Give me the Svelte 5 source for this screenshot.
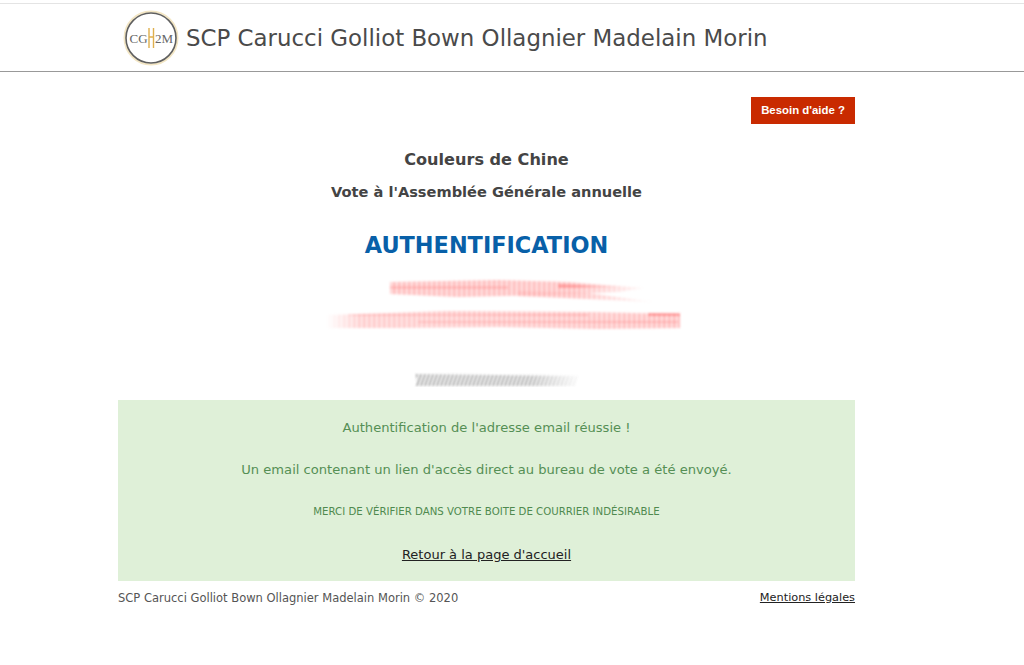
<script>
	const office = 'SCP Carucci Golliot Bown Ollagnier Madelain Morin';
</script>

<div class="page">
	<header class="topbar">
		<div class="brand">
			<svg class="logo" width="56" height="56" viewBox="0 0 56 56" aria-label="CG2M">
				<circle cx="28" cy="28" r="26.5" fill="none" stroke="#f3e6c4" stroke-width="2" />
				<circle cx="28" cy="28" r="25" fill="#fff" stroke="#5f5f5f" stroke-width="1.6" />
				<text x="6.5" y="33" class="logo-text">CG</text>
				<text x="32" y="33" class="logo-text">2M</text>
				<path d="M26 18v20M30.5 18v20M26 27h4.5" fill="none" stroke="#dfb04e" stroke-width="1.4" />
			</svg>
			<span class="office">{office}</span>
		</div>
	</header>

	<main class="content">
		<div class="help-row">
			<a class="help" href="#aide">Besoin d'aide ?</a>
		</div>

		<h1>Couleurs de Chine</h1>
		<h2>Vote à l'Assemblée Générale annuelle</h2>
		<h3>AUTHENTIFICATION</h3>

		<svg class="smears" width="737" height="116" viewBox="0 0 737 116" aria-hidden="true">
			<defs>
				<filter id="soft" x="-10%" y="-100%" width="120%" height="300%">
					<feGaussianBlur stdDeviation="0.9 0.9" />
				</filter>
				<pattern id="hatchRed" width="5" height="5" patternUnits="userSpaceOnUse">
					<rect width="5" height="5" fill="#fcc" fill-opacity="0.6" />
					<rect width="2.5" height="5" fill="#f99" fill-opacity="0.5" />
				</pattern>
				<pattern id="hatchGrey" width="4" height="4" patternUnits="userSpaceOnUse" patternTransform="skewX(-20)">
					<rect width="1.4" height="4" fill="#666" fill-opacity="0.8" />
				</pattern>
				<linearGradient id="fadeOut" x1="0" x2="1" y1="0" y2="0">
					<stop offset="0" stop-color="#fff" />
					<stop offset="0.7" stop-color="#fff" />
					<stop offset="1" stop-color="#000" />
				</linearGradient>
				<linearGradient id="fadeIn" x1="0" x2="1" y1="0" y2="0">
					<stop offset="0" stop-color="#000" />
					<stop offset="0.1" stop-color="#ccc" />
					<stop offset="1" stop-color="#fff" />
				</linearGradient>
				<mask id="maskOut" maskContentUnits="userSpaceOnUse">
					<rect x="268" y="0" width="272" height="35" fill="url(#fadeOut)" />
				</mask>
				<mask id="maskIn" maskContentUnits="userSpaceOnUse">
					<rect x="208" y="30" width="356" height="35" fill="url(#fadeIn)" />
				</mask>
				<mask id="maskGrey" maskContentUnits="userSpaceOnUse">
					<rect x="295" y="95" width="170" height="20" fill="url(#fadeOut)" />
				</mask>
			</defs>
			<g filter="url(#soft)">
				<g mask="url(#maskOut)">
					<path d="M272 11 L380 9 L450 11 L525 17 L500 21 L430 24 L340 26 L272 23 Z" fill="url(#hatchRed)" />
					<path d="M400 20 L470 22 L535 31 L470 28 L400 25 Z" fill="url(#hatchRed)" />
					<path d="M272 15 H390 V18 H272 Z" fill="#f77" fill-opacity="0.25" />
					<path d="M440 13 L505 16 L440 17 Z" fill="#f55" fill-opacity="0.4" />
				</g>
				<g mask="url(#maskIn)">
					<path d="M210 44 L330 40 L470 41 L562 43 L562 57 L480 58 L380 56 L280 57 L210 57 Z" fill="url(#hatchRed)" />
					<path d="M230 43 H470 V45 H230 Z" fill="#f66" fill-opacity="0.25" />
					<path d="M300 50 H560 V52 H300 Z" fill="#f66" fill-opacity="0.25" />
					<path d="M530 42 H562 V45 H530 Z" fill="#f44" fill-opacity="0.4" />
				</g>
				<g mask="url(#maskGrey)">
					<path d="M298 103 L460 105 L458 115 L298 115 Z" fill="url(#hatchGrey)" />
				</g>
			</g>
		</svg>

		<section class="notice">
			<p>Authentification de l'adresse email réussie !</p>
			<p>Un email contenant un lien d'accès direct au bureau de vote a été envoyé.</p>
			<p class="small">MERCI DE VÉRIFIER DANS VOTRE BOITE DE COURRIER INDÉSIRABLE</p>
			<a href="#accueil">Retour à la page d'accueil</a>
		</section>

		<footer class="foot">
			<span>{office} © 2020</span>
			<a href="#mentions">Mentions légales</a>
		</footer>
	</main>
</div>

<style>
	:global(body) {
		margin: 0;
		background: #fff;
	}

	.page {
		height: 665px;
		overflow: hidden;
		padding-top: 3px;
		box-sizing: border-box;
		font-family: 'DejaVu Sans', Verdana, sans-serif;
		color: #444;
	}

	.topbar {
		height: 67px;
		border-top: 1px solid #e4e4e4;
		border-bottom: 1px solid #999;
	}

	.brand {
		display: flex;
		align-items: center;
		width: 737px;
		height: 67px;
		margin-left: 123px;
		gap: 7px;
	}

	.logo {
		flex: none;
	}

	.logo-text {
		font-family: 'Liberation Serif', serif;
		font-size: 13px;
		fill: #666;
	}

	.office {
		font-size: 22.9px;
		color: #4a4a4a;
		white-space: nowrap;
	}

	.content {
		width: 737px;
		margin-left: 118px;
	}

	.help-row {
		display: flex;
		justify-content: flex-end;
		padding-top: 25px;
	}

	.help {
		display: block;
		width: 104px;
		height: 27px;
		line-height: 27px;
		text-align: center;
		background: #c92a00;
		color: #fff;
		font-family: 'Liberation Sans', Arial, sans-serif;
		font-size: 11.4px;
		font-weight: 700;
		text-decoration: none;
	}

	h1,
	h2,
	h3 {
		margin: 0;
		text-align: center;
		font-weight: 700;
	}

	h1 {
		margin-top: 25px;
		font-size: 16.1px;
		line-height: 22px;
	}

	h2 {
		margin-top: 10px;
		font-size: 14.6px;
		line-height: 22px;
	}

	h3 {
		margin-top: 28px;
		font-size: 22.4px;
		line-height: 28px;
		color: #0860a8;
	}

	.smears {
		display: block;
		margin-top: 12px;
		margin-bottom: 13px;
	}

	.notice {
		height: 181px;
		box-sizing: border-box;
		padding-top: 18px;
		background: #dff0d8;
		color: #558f55;
		text-align: center;
		font-size: 13.1px;
		line-height: 20px;
	}

	.notice p {
		margin: 0 0 22px;
	}

	.notice .small {
		margin-bottom: 23px;
		font-size: 10.2px;
		line-height: 20px;
		color: #4f8a4f;
	}

	.notice a {
		color: #222;
		font-size: 13px;
	}

	.foot {
		display: flex;
		justify-content: space-between;
		margin-top: 8px;
		font-size: 11.5px;
		line-height: 18px;
		color: #555;
	}

	.foot a {
		color: #222;
		font-size: 11.3px;
	}
</style>
